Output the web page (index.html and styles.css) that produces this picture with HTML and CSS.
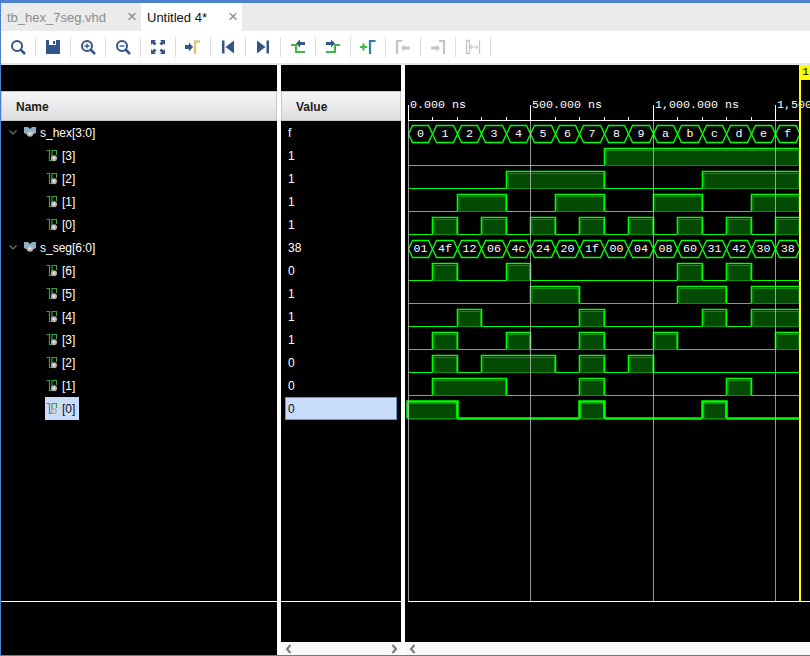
FILE: index.html
```html
<!DOCTYPE html>
<html lang="en">
<head>
<meta charset="UTF-8" />
<title>Untitled 4*</title>
<link rel="stylesheet" href="styles.css">
</head>
<body>
<!-- shared tree icons -->
<svg class="sprite" width="0" height="0">
  <symbol id="i-chevron" viewBox="0 0 8 5"><path d="M.5 .5L4 4 7.500 .5" fill="none" stroke="#777" stroke-width="1.100"/></symbol>
  <symbol id="i-bus" viewBox="0 0 12 11">
    <path d="M0 0h4l2 2 2-2h4v6l-2 1H2L0 6z" fill="#86afc9"/>
    <circle cx="6" cy="6.500" r="3.300" fill="#b4b4b4"/><circle cx="6" cy="6.500" r="1.200" fill="#eee"/>
  </symbol>
  <symbol id="i-bit" viewBox="0 0 12 12">
    <path d="M.5 .5H3.500V10.500H6V.5H10.500V5" fill="none" stroke="#3f9f4a" stroke-width="1.200"/>
    <circle cx="8" cy="8.200" r="3" fill="#b4b4b4"/><circle cx="8" cy="8.200" r="1.100" fill="#eee"/>
  </symbol>
  <symbol id="i-left" viewBox="0 0 7 10"><path d="M5.500 1L2 5l3.500 4" fill="none" stroke="#777" stroke-width="2"/></symbol>
  <symbol id="i-right" viewBox="0 0 7 10"><path d="M1.500 1L5 5 1.500 9" fill="none" stroke="#777" stroke-width="2"/></symbol>
</svg>

<div class="window">
  <div class="tabs">
    <div class="tab">tb_hex_7seg.vhd<span class="close">×</span></div>
    <div class="tab active">Untitled 4*<span class="close">×</span></div>
  </div>

  <div class="toolbar">
    <div class="tool"><svg viewBox="0 0 16 16"><circle cx="7" cy="7" r="5" fill="none" stroke="#34558b" stroke-width="2"/><path d="M10.500 10.500L15 15" stroke="#34558b" stroke-width="2.500"/></svg></div>
    <div class="tool"><svg viewBox="0 0 16 16"><path d="M1 1h14v14H1z" fill="#34558b"/><path d="M4 1h7v5H4z" fill="#fff"/><path d="M8 2h2v3H8z" fill="#34558b"/></svg></div>
    <div class="tool"><svg viewBox="0 0 16 16"><circle cx="7" cy="7" r="5" fill="none" stroke="#34558b" stroke-width="2"/><path d="M10.500 10.500L15 15" stroke="#34558b" stroke-width="2.500"/><path d="M4.500 7h5M7 4.500v5" stroke="#34558b" stroke-width="1.300"/></svg></div>
    <div class="tool"><svg viewBox="0 0 16 16"><circle cx="7" cy="7" r="5" fill="none" stroke="#34558b" stroke-width="2"/><path d="M10.500 10.500L15 15" stroke="#34558b" stroke-width="2.500"/><path d="M4.500 7h5" stroke="#34558b" stroke-width="1.300"/></svg></div>
    <div class="tool"><svg viewBox="0 0 16 16"><path d="M1 1h5L4.500 2.500 6.500 4.500 4.500 6.500 2.500 4.500 1 6zM15 1v5L13.500 4.500 11.500 6.500 9.500 4.500 11.500 2.500 10 1zM1 15v-5l1.500 1.500 2-2 2 2-2 2L6 15zM15 15h-5l1.500-1.500-2-2 2-2 2 2L15 10z" fill="#34558b"/></svg></div>
    <div class="tool"><svg viewBox="0 0 16 16"><path d="M0 6h4V3.500L8 8l-4 4.500V10H0z" fill="#34558b"/><path d="M10 15V2.500h5" fill="none" stroke="#dcc67f" stroke-width="2.500"/></svg></div>
    <div class="tool"><svg viewBox="0 0 16 16"><path d="M2 1.500h2.500v13H2zM14 1.500v13L5.500 8z" fill="#34558b"/></svg></div>
    <div class="tool"><svg viewBox="0 0 16 16"><path d="M11.500 1.500H14v13h-2.500zM2 1.500v13L10.500 8z" fill="#34558b"/></svg></div>
    <div class="tool"><svg viewBox="0 0 16 16"><path d="M1 6h5v7h9" fill="none" stroke="#3fb54a" stroke-width="2"/><path d="M15 3v3H10v2.500L6 4.500 10 .5V3z" fill="#34558b"/></svg></div>
    <div class="tool"><svg viewBox="0 0 16 16"><path d="M1 13h9V6h5" fill="none" stroke="#3fb54a" stroke-width="2"/><path d="M1 3v3h5v2.500l4-4-4-4V3z" fill="#34558b"/></svg></div>
    <div class="tool"><svg viewBox="0 0 16 16"><path d="M0 8h7M3.500 4.500v7" stroke="#3fb54a" stroke-width="2.200"/><path d="M10 15V2h5.500" fill="none" stroke="#2d7fa8" stroke-width="2.200"/></svg></div>
    <div class="tool"><svg viewBox="0 0 16 16"><path d="M2 15V2h5" fill="none" stroke="#c4c4c4" stroke-width="2.200"/><path d="M6 9l3.500-3.500V7.500H15v3H9.500v2z" fill="#c4c4c4"/></svg></div>
    <div class="tool"><svg viewBox="0 0 16 16"><path d="M14 15V2H9" fill="none" stroke="#c4c4c4" stroke-width="2.200"/><path d="M1 7.500h5.500v-2L10 9l-3.500 3.500v-2H1z" fill="#c4c4c4"/></svg></div>
    <div class="tool"><svg viewBox="0 0 16 16"><path d="M1.500 1.500h3v13h-3zM14.500 1.500v13" fill="none" stroke="#c4c4c4" stroke-width="1.300"/><path d="M5 8h8M5 8l2-2M5 8l2 2M13 8l-2-2M13 8l-2 2" fill="none" stroke="#c4c4c4"/></svg></div>
  </div>
  <div class="toolbar-edge"></div>

  <div class="panes">
    <div class="pane names">
      <div class="strip"></div>
      <div class="col-head">Name</div>
      <div class="rows">
        <div class="row bus"><svg class="chevron"><use href="#i-chevron"/></svg><svg class="bus-icon"><use href="#i-bus"/></svg><span>s_hex[3:0]</span></div>
        <div class="row bit"><svg class="bit-icon"><use href="#i-bit"/></svg><span>[3]</span></div>
        <div class="row bit"><svg class="bit-icon"><use href="#i-bit"/></svg><span>[2]</span></div>
        <div class="row bit"><svg class="bit-icon"><use href="#i-bit"/></svg><span>[1]</span></div>
        <div class="row bit"><svg class="bit-icon"><use href="#i-bit"/></svg><span>[0]</span></div>
        <div class="row bus"><svg class="chevron"><use href="#i-chevron"/></svg><svg class="bus-icon"><use href="#i-bus"/></svg><span>s_seg[6:0]</span></div>
        <div class="row bit"><svg class="bit-icon"><use href="#i-bit"/></svg><span>[6]</span></div>
        <div class="row bit"><svg class="bit-icon"><use href="#i-bit"/></svg><span>[5]</span></div>
        <div class="row bit"><svg class="bit-icon"><use href="#i-bit"/></svg><span>[4]</span></div>
        <div class="row bit"><svg class="bit-icon"><use href="#i-bit"/></svg><span>[3]</span></div>
        <div class="row bit"><svg class="bit-icon"><use href="#i-bit"/></svg><span>[2]</span></div>
        <div class="row bit"><svg class="bit-icon"><use href="#i-bit"/></svg><span>[1]</span></div>
        <div class="row bit"><div class="selected"><svg class="bit-icon"><use href="#i-bit"/></svg><span>[0]</span></div></div>
      </div>
      <div class="tail"></div>
    </div>

    <div class="pane values">
      <div class="strip"></div>
      <div class="col-head">Value</div>
      <div class="rows">
        <div class="row">f</div>
        <div class="row">1</div>
        <div class="row">1</div>
        <div class="row">1</div>
        <div class="row">1</div>
        <div class="row">38</div>
        <div class="row">0</div>
        <div class="row">1</div>
        <div class="row">1</div>
        <div class="row">1</div>
        <div class="row">0</div>
        <div class="row">0</div>
        <div class="row"><div class="selected">0</div></div>
      </div>
      <div class="tail"><div class="scrollbar"><svg><use href="#i-left"/></svg><svg><use href="#i-right"/></svg></div></div>
    </div>

    <div class="pane wave">
      <svg id="waves" viewBox="405 65 405 577"></svg>
      <div class="scrollbar"><svg><use href="#i-left"/></svg></div>
    </div>
  </div>
</div>

<script src="waves.js"></script>
</body>
</html>
```

FILE: styles.css
```css
html, body { margin: 0; height: 100%; overflow: hidden; background: #fff; }
body { font-family: "Liberation Sans", Arial, sans-serif; font-size: 12px; }
.sprite { position: absolute; }

.window { height: 656px; box-sizing: border-box; display: flex; flex-direction: column; border-top: 3px solid #4d81cf; border-left: 1px solid #4d81cf; border-bottom: 1px solid #4d81cf; }

.tabs { display: flex; height: 28px; flex: none; background: #ebebeb; }
.tab { width: 134px; padding-left: 6px; display: flex; align-items: center; justify-content: space-between; font-size: 13px; color: #8a8a8a; }
.tab.active { width: 95px; padding-left: 6px; background: #fff; color: #111; }
.close { width: 16px; margin-right: 1px; font-size: 17px; color: #888; text-align: center; }

.toolbar { display: flex; height: 32px; flex: none; align-items: center; background: #fff; }
.tool { width: 34px; height: 20px; flex: none; display: flex; align-items: center; justify-content: center; border-right: 1px solid #dcdcdc; }
.tool svg { width: 16px; height: 16px; }
.toolbar-edge { height: 2px; flex: none; background: #e6e6e6; }

.panes { flex: 1; min-height: 0; display: flex; gap: 4px; background: #fff; }
.pane { display: flex; flex-direction: column; background: #000; color: #fff; }
.names { width: 276px; }
.values { width: 120px; }
.wave { width: 405px; }

.strip { height: 26px; flex: none; }
.col-head { height: 30px; flex: none; box-sizing: border-box; padding: 1px 0 0 14px; display: flex; align-items: center; font-weight: 700; color: #1c1c1c; background: linear-gradient(#f6f6f6, #dedede); border: 1px solid #c6c6c6; }
.rows { flex: 1; }
.row { height: 23px; display: flex; align-items: center; }
.bus span { margin-left: 4px; }
.bit { padding-left: 44px; }
.bit span { margin-left: 4px; }
.bit .bit-icon { margin-left: 1px; }
.values .row { padding-left: 7px; }

.chevron { width: 8px; height: 5px; margin-left: 8px; margin-right: 7px; }
.bus-icon { width: 12px; height: 11px; }
.bit-icon { width: 12px; height: 12px; }

.row .selected { display: flex; align-items: center; height: 23px; color: #101010; background: #c9dcfb; }
.names .selected { padding-right: 4px; }
.values .row .selected { box-sizing: border-box; width: 112px; margin-left: -3px; padding-left: 2px; border: 1px solid #5a9bd0; }

.tail { height: 54px; flex: none; box-sizing: border-box; display: flex; flex-direction: column; justify-content: flex-end; border-top: 1px solid #fff; }
.scrollbar { height: 13px; flex: none; display: flex; justify-content: space-between; align-items: center; padding: 0 3px 0 4px; background: #f8f8f8; }
.scrollbar svg { width: 7px; height: 10px; }

#waves { width: 405px; height: 577px; flex: none; display: block; }
.wave-fill { fill: #034b03; stroke: #0a8f0a; stroke-width: 1; }
.wave-line { fill: none; stroke: #0f0; stroke-width: 1; }
.wave-high { fill: none; stroke: #0f0; stroke-width: 1.600; }
.wave-line.current, .wave-high.current { stroke-width: 2.500; }
.bus-shape { fill: none; stroke: #0f0; stroke-width: 1.400; }
.label { font-family: "Liberation Mono", monospace; font-size: 11.670px; fill: #fff; }
.label.mid { text-anchor: middle; }
.grid { stroke: #bdbdbd; stroke-width: 1; opacity: .8; }
.axis { stroke: #fff; stroke-width: 1; }
.cursor { stroke: #ff0; stroke-width: 2; }
.cursor-box { fill: #ff0; }
.cursor-text { font-family: "Liberation Mono", monospace; font-size: 11.670px; fill: #000; }
```

FILE: waves.js
```js
const X0 = 408;
const STEP = 24.47;
const END = 800;
const seg = [0x01, 0x4f, 0x12, 0x06, 0x4c, 0x24, 0x20, 0x1f, 0x00, 0x04, 0x08, 0x60, 0x31, 0x42, 0x30, 0x38];
const hex = seg.map((_, i) => i);

function xAt(i) {
  return i >= 16 ? END : Math.round(X0 + STEP * i) + 0.5;
}

function busRow(values, low, pad) {
  const top = low - 17, mid = low - 8.5;
  let out = '';
  values.forEach((v, i) => {
    const a = xAt(i), b = xAt(i + 1);
    out += `<polygon class="bus-shape" points="${a},${mid} ${a + 4},${top} ${b - 4},${top} ${b},${mid} ${b - 4},${low} ${a + 4},${low}"/>`;
    const text = v.toString(16).padStart(pad, '0');
    out += `<text class="label mid" x="${(a + b) / 2}" y="${mid + 2.5}">${text}</text>`;
  });
  return out;
}

function bitRow(values, bit, low, current) {
  const top = low - 17;
  const cls = current ? ' current' : '';
  // low line first, then each high run on top of it
  let out = `<path class="wave-line${cls}" d="M${xAt(0) - (current ? 1 : 0)} ${low}H${END}"/>`;
  let i = 0;
  while (i < 16) {
    if ((values[i] >> bit) & 1) {
      let j = i;
      while (j < 16 && (values[j] >> bit) & 1) j++;
      const a = xAt(i) - (current && i === 0 ? 1 : 0), b = xAt(j);
      out += `<rect x="${a}" y="${top}" width="${b - a}" height="${low - top + 1}" fill="#000"/>`;
      out += `<rect class="wave-fill" x="${a + 1.5}" y="${top + 2}" width="${b - a - 2.5}" height="${low - top - 2}"/>`;
      out += `<path class="wave-high${cls}" d="M${a} ${low}V${top}H${b}V${low}"/>`;
      i = j;
    } else {
      i++;
    }
  }
  return out;
}

let svg = '';

// ruler
svg += '<path class="axis" d="M408 120.500H799"/>';
for (let i = 0; i < 16; i++) {
  svg += `<path class="axis" d="M${xAt(i)} ${i % 5 === 0 ? 105 : 117}V121"/>`;
}
[[0, '0.000 ns'], [5, '500.000 ns'], [10, '1,000.000 ns'], [15, '1,500.000 ns']].forEach(([i, t]) => {
  svg += `<text class="label" x="${xAt(i) + 1.5}" y="108">${t}</text>`;
});

// traces
svg += busRow(hex, 142.5, 1);
[3, 2, 1, 0].forEach((bit, i) => { svg += bitRow(hex, bit, 165.5 + 23 * i, false); });
svg += busRow(seg, 257.5, 2);
[6, 5, 4, 3, 2, 1, 0].forEach((bit, i) => { svg += bitRow(seg, bit, 280.5 + 23 * i, bit === 0); });

// grid, cursor
[0, 5, 10, 15].forEach(i => {
  svg += `<path class="grid" d="M${xAt(i)} 121V601"/>`;
});
svg += '<path class="axis" d="M408 601.500H810"/>';
svg += '<path class="cursor" d="M800 65V601"/>';
svg += '<rect class="cursor-box" x="800" y="65" width="10" height="15"/>';
svg += '<text class="cursor-text" x="802" y="75">1</text>';

document.getElementById('waves').innerHTML = svg;
```
